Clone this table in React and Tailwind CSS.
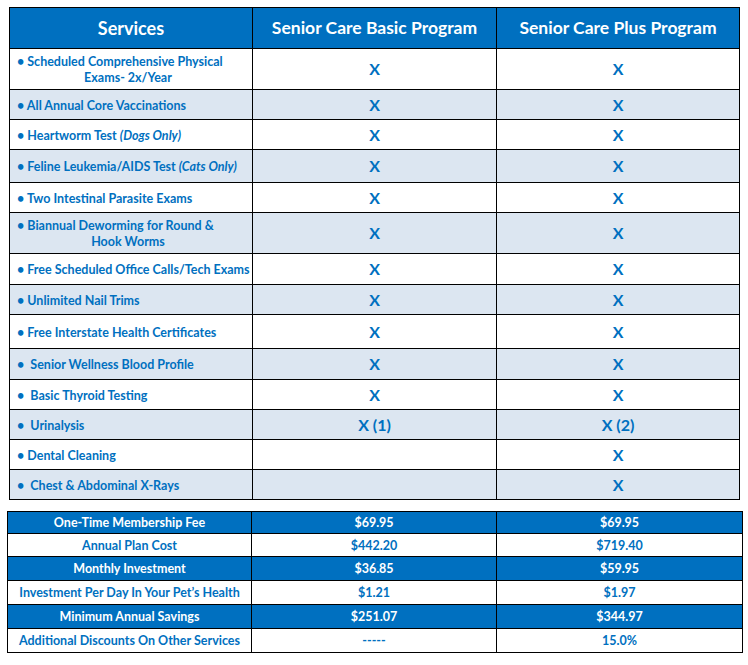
const services = [
  { h: "h-[41px]", lines: ["• Scheduled Comprehensive Physical", "Exams- 2x/Year"], basic: "X", plus: "X", white: true },
  { h: "h-[30px]", label: <>• All Annual Core Vaccinations</>, basic: "X", plus: "X" },
  { h: "h-[30px]", label: <>• Heartworm Test <i>(Dogs Only)</i></>, basic: "X", plus: "X", white: true },
  { h: "h-[33px]", label: <>• Feline Leukemia/AIDS Test <i>(Cats Only)</i></>, basic: "X", plus: "X" },
  { h: "h-[30px]", label: <>• Two Intestinal Parasite Exams</>, basic: "X", plus: "X", white: true },
  { h: "h-[41px]", lines: ["• Biannual Deworming for Round &", "Hook Worms"], basic: "X", plus: "X" },
  { h: "h-[31px]", label: <>• Free Scheduled Office Calls/Tech Exams</>, basic: "X", plus: "X", white: true },
  { h: "h-[30px]", label: <>• Unlimited Nail Trims</>, basic: "X", plus: "X" },
  { h: "h-[34px]", label: <>• Free Interstate Health Certificates</>, basic: "X", plus: "X", white: true },
  { h: "h-[31px]", label: <>•&nbsp; Senior Wellness Blood Profile</>, basic: "X", plus: "X" },
  { h: "h-[30px]", label: <>•&nbsp; Basic Thyroid Testing</>, basic: "X", plus: "X", white: true },
  { h: "h-[30px]", label: <>•&nbsp; Urinalysis</>, basic: "X (1)", plus: "X (2)" },
  { h: "h-[30px]", label: <>• Dental Cleaning</>, basic: "", plus: "X", white: true },
  { h: "h-[30px]", label: <>•&nbsp; Chest &amp; Abdominal X-Rays</>, basic: "", plus: "X" },
]

const costs = [
  { h: "h-[22px]", label: "One-Time Membership Fee", basic: "$69.95", plus: "$69.95", blue: true },
  { h: "h-[23px]", label: "Annual Plan Cost", basic: "$442.20", plus: "$719.40" },
  { h: "h-[24px]", label: "Monthly Investment", basic: "$36.85", plus: "$59.95", blue: true },
  { h: "h-[24px]", label: "Investment Per Day In Your Pet’s Health", basic: "$1.21", plus: "$1.97" },
  { h: "h-[24px]", label: "Minimum Annual Savings", basic: "$251.07", plus: "$344.97", blue: true },
  { h: "h-[24px]", label: "Additional Discounts On Other Services", basic: "-----", plus: "15.0%" },
]

const cell = "border-r border-b border-black flex items-center"

export default function App() {
  return (
    <div className="w-[748px] h-[665px] bg-white font-['Lato','Liberation_Sans',sans-serif] font-bold text-[#0070c0] pt-[7px]">
      <div className="ml-[9px] w-[731px] border-l border-t border-black grid grid-cols-[243px_244px_243px]">
        <div className={`${cell} h-[41px] justify-center bg-[#0070c0] text-white text-[18px]`}>Services</div>
        <div className={`${cell} h-[41px] justify-center bg-[#0070c0] text-white text-[17.5px]`}>Senior Care Basic Program</div>
        <div className={`${cell} h-[41px] justify-center bg-[#0070c0] text-white text-[17.5px]`}>Senior Care Plus Program</div>
        {services.map((s, i) => {
          const bg = s.white ? "bg-white" : "bg-[#dce6f1]"
          return [
            <div key={i + "a"} className={`${cell} ${s.h} ${bg} pl-[7px] pt-[2px] text-[12.5px] leading-[16px]`}>
              {s.lines ? (
                <div className="w-[222px]">
                  <div>{s.lines[0]}</div>
                  <div className="text-center">{s.lines[1]}</div>
                </div>
              ) : (
                <span>{s.label}</span>
              )}
            </div>,
            <div key={i + "b"} className={`${cell} ${s.h} ${bg} justify-center text-[16px]`}>{s.basic}</div>,
            <div key={i + "c"} className={`${cell} ${s.h} ${bg} justify-center text-[16px]`}>{s.plus}</div>,
          ]
        })}
      </div>

      <div className="mt-[11px] ml-[7px] w-[736px] border-l border-t border-black grid grid-cols-[244px_245px_246px] text-[12.5px]">
        {costs.map((c, i) => {
          const tone = c.blue ? "bg-[#0070c0] text-white" : "bg-white"
          return [
            <div key={i + "a"} className={`${cell} ${c.h} ${tone} justify-center pt-[2px]`}>{c.label}</div>,
            <div key={i + "b"} className={`${cell} ${c.h} ${tone} justify-center pt-[2px]`}>{c.basic}</div>,
            <div key={i + "c"} className={`${cell} ${c.h} ${tone} justify-center pt-[2px]`}>{c.plus}</div>,
          ]
        })}
      </div>
    </div>
  )
}
